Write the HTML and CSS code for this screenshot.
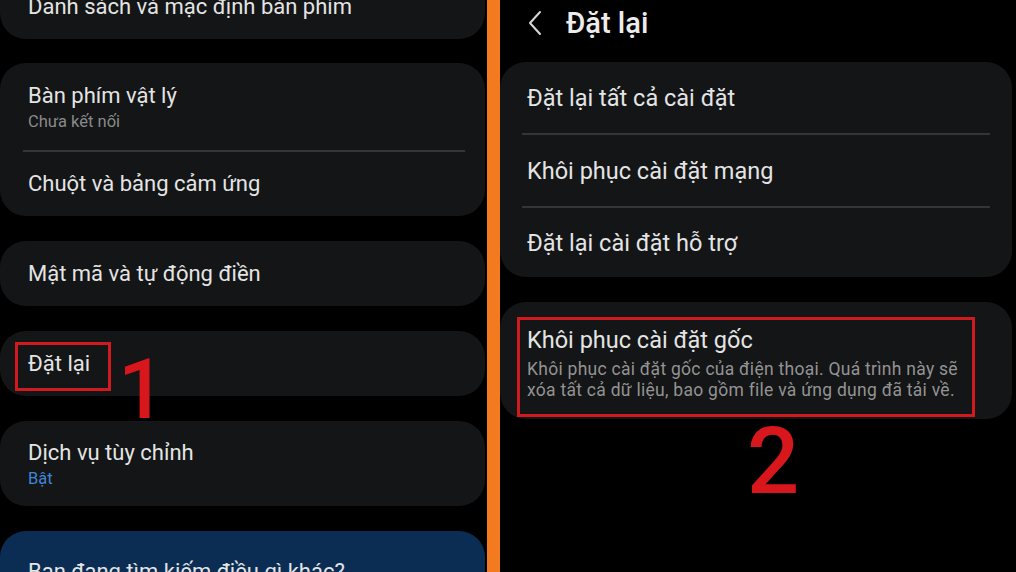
FILE: index.html
```html
<!DOCTYPE html>
<html lang="vi">
<head>
<meta charset="utf-8">
<title>Đặt lại</title>
<link rel="stylesheet" href="styles.css">
</head>
<body>
<div class="screen">
  <div class="left">
    <div class="card first">
      <div class="row"><span class="t">Danh sách và mặc định bàn phím</span></div>
    </div>
    <div class="card">
      <div class="row tall">
        <span class="t">Bàn phím vật lý</span>
        <span class="s">Chưa kết nối</span>
      </div>
      <div class="sep"></div>
      <div class="row short"><span class="t">Chuột và bảng cảm ứng</span></div>
    </div>
    <div class="card">
      <div class="row"><span class="t">Mật mã và tự động điền</span></div>
    </div>
    <div class="card">
      <div class="row"><span class="t mark">Đặt lại</span></div>
    </div>
    <div class="card">
      <div class="row mid">
        <span class="t">Dịch vụ tùy chỉnh</span>
        <span class="s blue">Bật</span>
      </div>
    </div>
    <div class="card navy">
      <div class="row top"><span class="t">Bạn đang tìm kiếm điều gì khác?</span></div>
    </div>
    <span class="num one">1</span>
  </div>
  <div class="bar"></div>
  <div class="right">
    <div class="header">
      <svg class="back" width="16" height="26" viewBox="0 0 16 26"><path d="M13 2 L3 13 L13 24" fill="none" stroke="#d6d6d6" stroke-width="2" stroke-linecap="round" stroke-linejoin="round"/></svg>
      <span class="title">Đặt lại</span>
    </div>
    <div class="card rcard">
      <div class="row r"><span class="t">Đặt lại tất cả cài đặt</span></div>
      <div class="sep rsep"></div>
      <div class="row r"><span class="t">Khôi phục cài đặt mạng</span></div>
      <div class="sep rsep"></div>
      <div class="row r last"><span class="t">Đặt lại cài đặt hỗ trợ</span></div>
    </div>
    <div class="card rcard factory">
      <div class="box">
        <span class="t">Khôi phục cài đặt gốc</span>
        <span class="desc">Khôi phục cài đặt gốc của điện thoại. Quá trình này sẽ<br>xóa tất cả dữ liệu, bao gồm file và ứng dụng đã tải về.</span>
      </div>
    </div>
    <span class="num two">2</span>
  </div>
</div>
</body>
</html>
```
FILE: styles.css
```css
* { box-sizing: border-box; }
html, body {
  margin: 0;
  padding: 0;
  background: #000;
}
body {
  width: 1016px;
  height: 572px;
  overflow: hidden;
  font-family: Roboto, "Noto Sans", "Liberation Sans", sans-serif;
  color: #e6e6e6;
}
.screen {
  display: flex;
  width: 1016px;
  height: 572px;
}
.left {
  position: relative;
  width: 487px;
  height: 572px;
  overflow: hidden;
  display: flex;
  flex-direction: column;
  gap: 25px;
  padding-right: 2px;
}
.bar {
  width: 13px;
  height: 572px;
  background: #f47a1f;
  flex: none;
}
.right {
  position: relative;
  flex: 1;
  height: 572px;
  overflow: hidden;
  display: flex;
  flex-direction: column;
  padding-right: 4px;
}
.card {
  background: #131516;
  border-radius: 26px;
  display: flex;
  flex-direction: column;
  flex: none;
}
.card.first {
  margin-top: -26px;
  margin-bottom: -1px;
}
.card.navy {
  background: #0b2d53;
  height: 80px;
}
.row {
  height: 65px;
  display: flex;
  flex-direction: column;
  justify-content: center;
  padding-left: 28px;
}
.row.tall { height: 87px; padding-top: 2px; }
.row.short { height: 64px; }
.row.mid { height: 85px; padding-top: 2px; }
.row.top { justify-content: flex-start; padding-top: 28px; }
.t {
  font-size: 22px;
  line-height: 26px;
  color: #e4e4e4;
  white-space: nowrap;
}
.s {
  font-size: 16.5px;
  line-height: 20px;
  color: #8a8a8a;
  margin-top: 1px;
}
.row.tall .s { margin-top: 3px; }
.row.mid .s { margin-top: 3px; }
.s.blue { color: #3f86d8; }
.sep {
  height: 2px;
  background: #333536;
  margin: 0 20px 0 23px;
}
.mark {
  align-self: flex-start;
  border: 3px solid #d11a1e;
  margin-left: -13px;
  margin-top: 6px;
  padding: 6px 18px 11px 10px;
  line-height: 26px;
}
.num {
  position: absolute;
  color: #d8171c;
  font-family: Roboto, "Liberation Sans", sans-serif;
  line-height: 1;
  font-weight: 500;
}
.num.one {
  left: 118px;
  top: 348px;
  font-size: 84px;
}
.num.two {
  left: 247px;
  top: 416px;
  font-size: 92px;
}
.header {
  height: 62px;
  display: flex;
  align-items: center;
  padding-left: 27px;
  padding-bottom: 17px;
  flex: none;
}
.back { flex: none; }
.title {
  margin-left: 23px;
  font-size: 29px;
  font-weight: 500;
  color: #ececec;
}
.rcard .t { font-size: 23.5px; }
.row.r { height: 71px; padding-left: 27px; }
.row.r.last { height: 69px; }
.rsep { margin: 0 22px 0 22px; }
.factory {
  margin-top: 25px;
  padding: 15px 0 2px 17px;
}
.box {
  width: 458px;
  border: 3px solid #d11a1e;
  padding: 8px 6px 13px 7px;
  display: flex;
  flex-direction: column;
}
.box .t {
  line-height: 24px;
  margin-bottom: 7px;
}
.desc {
  font-size: 17.5px;
  line-height: 21px;
  letter-spacing: 0.27px;
  color: #939393;
  white-space: nowrap;
}
```
